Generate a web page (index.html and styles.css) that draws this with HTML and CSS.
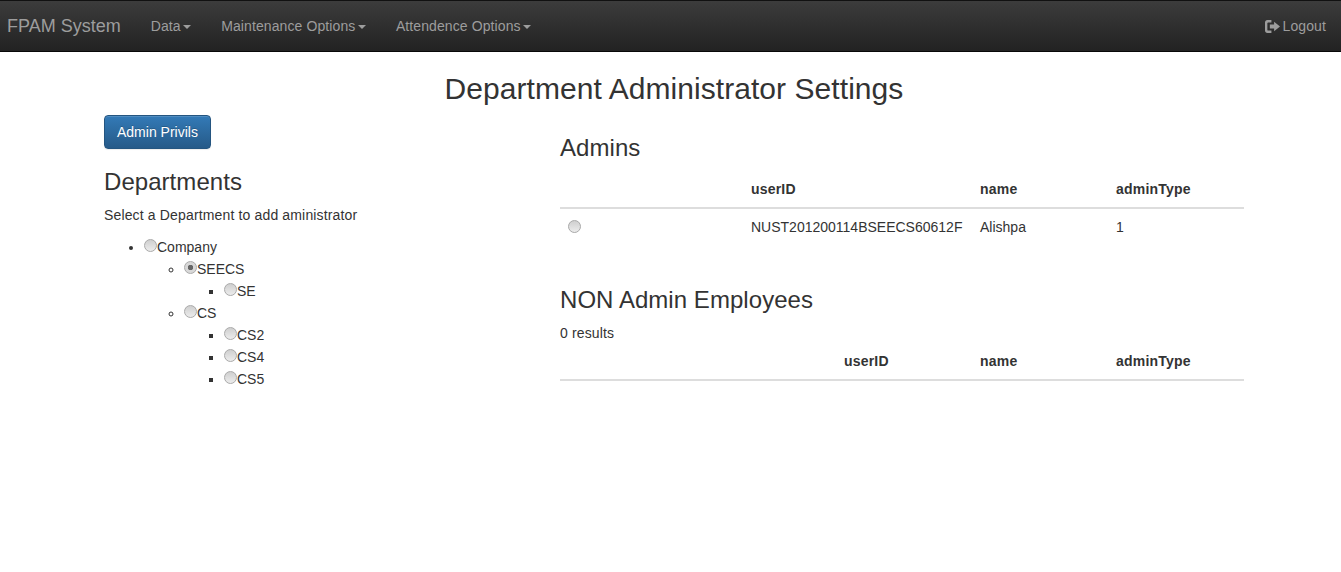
FILE: index.html
```html
<!DOCTYPE html>
<html lang="en">

<head>
    <meta charset="UTF-8">
    <title>Department Administrator Settings</title>
    <link rel="stylesheet" href="styles.css">
</head>

<body>
    <nav class="navbar">
        <a class="brand" href="#">FPAM System</a>
        <ul class="nav">
            <li><a href="#">Data<span class="caret"></span></a></li>
            <li><a href="#">Maintenance Options<span class="caret"></span></a></li>
            <li><a href="#">Attendence Options<span class="caret"></span></a></li>
        </ul>
        <a class="logout" href="#">
            <svg class="logout-icon" viewBox="0 0 14 12" width="15" height="13">
                <path d="M6 0H2.2C1 0 0 1 0 2.2v7.6C0 11 1 12 2.2 12H6V9.800H3C2.500 9.800 2.200 9.500 2.200 9V3C2.200 2.500 2.500 2.200 3 2.200h3z" fill="currentColor"/>
                <path d="M4.500 4.200h4V1.500L14 6 8.500 10.500V7.800h-4z" fill="currentColor"/>
            </svg>
            Logout
        </a>
    </nav>

    <div class="container">
        <h1 class="page-title">Department Administrator Settings</h1>
        <div class="row">
            <div class="col-left">
                <a class="btn" href="#">Admin Privils</a>
                <h3 class="dept-heading">Departments</h3>
                <p>Select a Department to add aministrator</p>
                <ul class="tree">
                    <li><input type="radio" name="dept">Company
                        <ul>
                            <li><input type="radio" name="dept" checked>SEECS
                                <ul>
                                    <li><input type="radio" name="dept">SE</li>
                                </ul>
                            </li>
                            <li><input type="radio" name="dept">CS
                                <ul>
                                    <li><input type="radio" name="dept">CS2</li>
                                    <li><input type="radio" name="dept">CS4</li>
                                    <li><input type="radio" name="dept">CS5</li>
                                </ul>
                            </li>
                        </ul>
                    </li>
                </ul>
            </div>
            <div class="col-right">
                <h3>Admins</h3>
                <table class="table">
                    <colgroup>
                        <col class="w-183"><col class="w-229"><col class="w-136"><col>
                    </colgroup>
                    <thead>
                        <tr><th></th><th>userID</th><th>name</th><th>adminType</th></tr>
                    </thead>
                    <tbody>
                        <tr>
                            <td><input type="radio" name="admin"></td>
                            <td>NUST201200114BSEECS60612F</td>
                            <td>Alishpa</td>
                            <td>1</td>
                        </tr>
                    </tbody>
                </table>

                <h3 class="non-admin">NON Admin Employees</h3>
                <p class="results">0 results</p>
                <table class="table">
                    <colgroup>
                        <col class="w-276"><col class="w-136"><col class="w-136"><col>
                    </colgroup>
                    <thead>
                        <tr><th></th><th>userID</th><th>name</th><th>adminType</th></tr>
                    </thead>
                </table>
            </div>
        </div>
    </div>
</body>

</html>
```

FILE: styles.css
```css
* {
    box-sizing: border-box;
}

body {
    margin: 0;
    font-family: "Liberation Sans", Arial, sans-serif;
    font-size: 14px;
    line-height: 20px;
    color: #333;
    background-color: #fff;
}

a {
    text-decoration: none;
}

/* navbar */
.navbar {
    display: flex;
    align-items: center;
    height: 52px;
    border-top: 1px solid #111;
    border-bottom: 1px solid #080808;
    background-image: linear-gradient(to bottom, #3c3c3c 0, #222 100%);
}

.brand {
    padding: 0 15px 0 7px;
    font-size: 18px;
    line-height: 50px;
    color: #9d9d9d;
}

.nav {
    display: flex;
    flex: 1;
    margin: 0;
    padding: 0;
    list-style: none;
}

.nav a {
    display: block;
    padding: 0 15px;
    line-height: 50px;
    letter-spacing: .1px;
    color: #9d9d9d;
}

.caret {
    display: inline-block;
    margin-left: 2.500px;
    vertical-align: middle;
    border-top: 4px solid #9d9d9d;
    border-right: 4px solid transparent;
    border-left: 4px solid transparent;
}

.logout {
    display: flex;
    align-items: center;
    gap: 3px;
    padding-right: 15px;
    line-height: 50px;
    letter-spacing: .1px;
    color: #9d9d9d;
}

.logout-icon {
    display: block;
}

/* page */
.container {
    width: 1170px;
    margin-left: 89px;
}

.page-title {
    margin: 20px 0 10px;
    font-size: 30px;
    font-weight: 500;
    line-height: 33px;
    letter-spacing: .06px;
    text-align: center;
}

.row {
    display: flex;
}

.col-left {
    width: 456px;
    padding: 0 15px;
}

.col-right {
    width: 714px;
    padding: 0 15px;
}

h3 {
    margin: 20px 0 10px;
    font-size: 24px;
    font-weight: 500;
    line-height: 26px;
    letter-spacing: .05px;
}

p {
    margin: 0 0 10px;
    letter-spacing: .15px;
}

.btn {
    display: inline-block;
    padding: 6px 12px;
    border: 1px solid #245580;
    border-radius: 4px;
    color: #fff;
    background-image: linear-gradient(to bottom, #337ab7 0, #265a88 100%);
    box-shadow: inset 0 1px 0 rgba(255, 255, 255, .15), 0 1px 1px rgba(0, 0, 0, .075);
    text-shadow: 0 -1px 0 rgba(0, 0, 0, .2);
}

.dept-heading {
    margin-top: 20px;
}

/* department tree */
.tree, .tree ul {
    margin: 0;
    padding-left: 40px;
}

.tree {
    margin-top: 11px;
    margin-bottom: 10px;
}

.tree li {
    line-height: 22px;
}

input[type="radio"] {
    appearance: none;
    display: inline-block;
    width: 13px;
    height: 13px;
    margin: 0;
    border: 1px solid #aaa;
    border-radius: 50%;
    background: linear-gradient(to bottom, #cfcfcf, #ececec);
    vertical-align: 0;
}

input[type="radio"]:checked {
    background: radial-gradient(circle, #666 0, #666 2.500px, #d8d8d8 3px);
}

/* tables */
.table {
    width: 100%;
    margin-bottom: 20px;
    border-collapse: collapse;
    table-layout: fixed;
}

.table th, .table td {
    padding: 8px;
    text-align: left;
    vertical-align: top;
}

.table th {
    vertical-align: bottom;
    letter-spacing: .2px;
    border-bottom: 2px solid #ddd;
}

.table td input {
    vertical-align: -1px;
}

.w-183 { width: 183px; }
.w-229 { width: 229px; }
.w-136 { width: 136px; }
.w-276 { width: 276px; }

.non-admin {
    margin-top: 42px;
}

.results {
    margin-bottom: 0;
}
```
